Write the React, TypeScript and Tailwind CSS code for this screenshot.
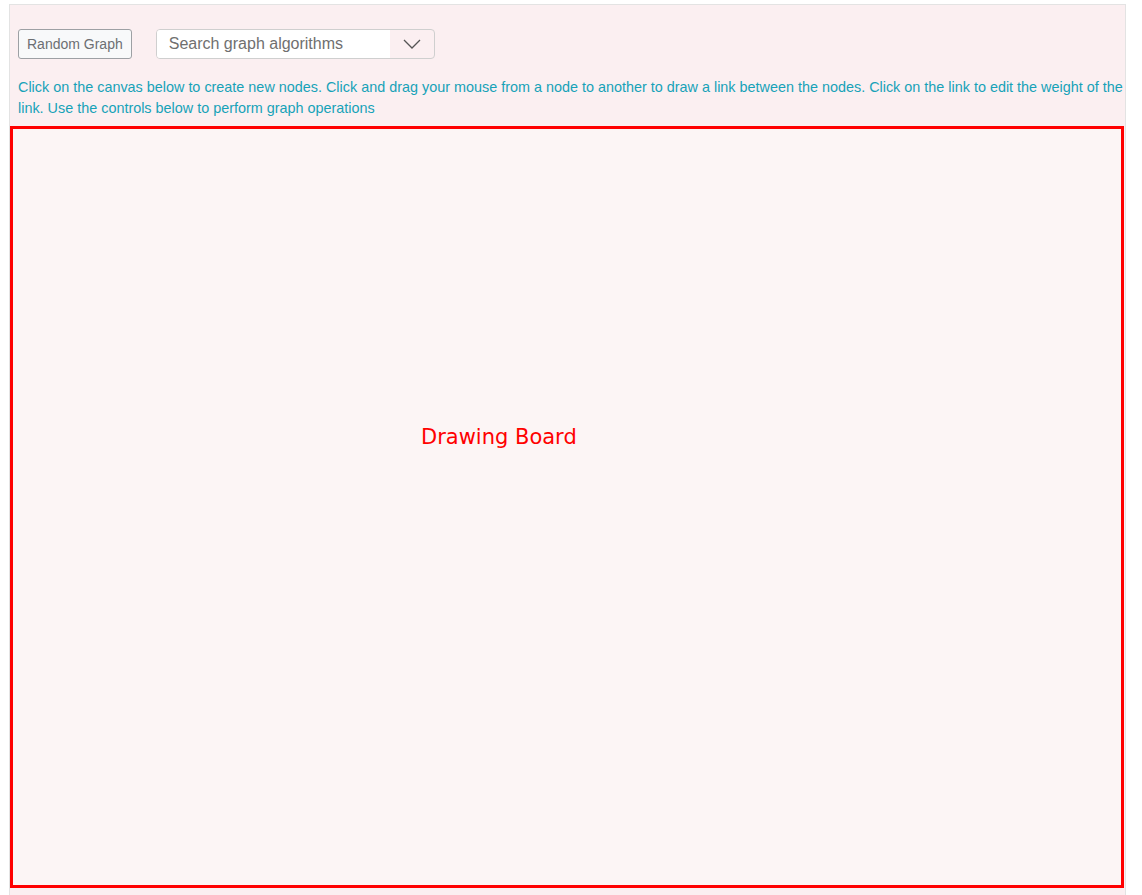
import { useState } from 'react';

export default function App() {
  const [query, setQuery] = useState('');

  return (
    <div className="min-h-screen bg-white" style={{ fontFamily: '"Liberation Sans", Arial, sans-serif' }}>
      <div className="ml-[9px] mt-[4px] w-[1117px] h-[900px] border border-[#e3e3e3] bg-[#fbeff1]">
        {/* Controls */}
        <div className="flex items-center gap-6 px-2 pt-6">
          <button className="h-[30px] px-2 rounded-[3px] border border-[#9da0a4] bg-[#f8f9fa] text-sm text-[#6c6f73]">
            Random Graph
          </button>
          <div className="flex h-[30px] w-[279px] rounded border border-[#cfcfcf] overflow-hidden">
            <input
              value={query}
              onChange={(e) => setQuery(e.target.value)}
              placeholder="Search graph algorithms"
              className="w-[233px] bg-white pl-3 text-base text-[#333] placeholder:text-[#6f6f6f] outline-none"
            />
            <div className="flex flex-1 items-center justify-center">
              <svg width="18" height="10" viewBox="0 0 18 10" fill="none">
                <polyline points="1,1 9,9 17,1" stroke="#555" strokeWidth="1.3" />
              </svg>
            </div>
          </div>
        </div>

        {/* Help text */}
        <p className="mt-[18px] pl-2 text-[14.4px] leading-[21px] text-[#17a2b8]">
          Click on the canvas below to create new nodes. Click and drag your mouse from a node to another to draw a link between the nodes. Click on the link to edit the weight of the link. Use the controls below to perform graph operations
        </p>

        {/* Drawing board */}
        <div className="mt-[7px] w-[1114px] h-[762px] border-[3px] border-[#ff0000] bg-[#fcf5f5]">
          <svg width="100%" height="100%">
            <text x="408" y="315" fill="#ff0000" fontSize="21" fontFamily='"DejaVu Sans", sans-serif'>
              Drawing Board
            </text>
          </svg>
        </div>
      </div>
    </div>
  );
}
